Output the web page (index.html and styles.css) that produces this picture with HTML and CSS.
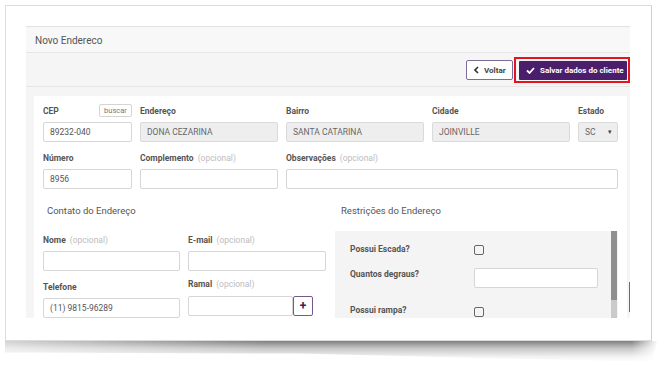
FILE: index.html
```html
<!DOCTYPE html>
<html lang="pt-BR">
<head>
  <meta charset="UTF-8">
  <title>Novo Endereco</title>
  <link rel="stylesheet" href="styles.css">
</head>
<body>
  <div class="sheet">
  <div class="frame">
    <div class="app">
      <div class="app-title">Novo Endereco</div>

      <!-- actions -->
      <div class="toolbar">
        <button class="btn-back">
          <svg width="5" height="8" viewBox="0 0 5 8"><path d="M4 1 L1 4 L4 7" stroke="#333" stroke-width="1.6" fill="none"/></svg>
          Voltar
        </button>
        <span class="highlight">
          <button class="btn-save">
            <svg width="9" height="7" viewBox="0 0 9 7"><path d="M1 3.5 L3.5 6 L8 1" stroke="#fff" stroke-width="1.8" fill="none"/></svg>
            Salvar dados do cliente
          </button>
        </span>
      </div>

      <div class="content">
        <div class="card">

          <!-- address -->
          <div class="grid-top">
            <div>
              <div class="field-label">CEP <span class="buscar">buscar</span></div>
              <input class="input" type="text" value="89232-040">
            </div>
            <div>
              <div class="field-label">Endereço</div>
              <input class="input locked" type="text" value="DONA CEZARINA" readonly>
            </div>
            <div>
              <div class="field-label">Bairro</div>
              <input class="input locked" type="text" value="SANTA CATARINA" readonly>
            </div>
            <div>
              <div class="field-label">Cidade</div>
              <input class="input locked" type="text" value="JOINVILLE" readonly>
            </div>
            <div>
              <div class="field-label">Estado</div>
              <div class="input locked select">SC <span class="caret">▾</span></div>
            </div>
          </div>

          <div class="grid-second">
            <div>
              <div class="field-label">Número</div>
              <input class="input" type="text" value="8956">
            </div>
            <div>
              <div class="field-label">Complemento <span class="opt">(opcional)</span></div>
              <input class="input" type="text">
            </div>
            <div>
              <div class="field-label">Observações <span class="opt">(opcional)</span></div>
              <input class="input" type="text">
            </div>
          </div>

          <div class="sections">
            <!-- contact -->
            <div>
              <h3 class="contact-title">Contato do Endereço</h3>
              <div class="contact-grid">
                <div>
                  <div class="field-label">Nome <span class="opt">(opcional)</span></div>
                  <input class="input" type="text">
                </div>
                <div>
                  <div class="field-label">E-mail <span class="opt">(opcional)</span></div>
                  <input class="input" type="email">
                </div>
                <div>
                  <div class="field-label">Telefone</div>
                  <input class="input" type="text" value="(11) 9815-96289">
                </div>
                <div>
                  <div class="field-label ramal">Ramal <span class="opt">(opcional)</span></div>
                  <div class="ramal-row">
                    <input class="input" type="text">
                    <button class="btn-plus">+</button>
                  </div>
                </div>
              </div>
            </div>

            <!-- restrictions -->
            <div>
              <h3 class="restrict-title">Restrições do Endereço</h3>
              <div class="panel">
                <div class="panel-body">
                  <div class="prow first">
                    <span>Possui Escada?</span>
                    <span class="check"></span>
                  </div>
                  <div class="prow">
                    <span>Quantos degraus?</span>
                    <input class="input" type="text">
                  </div>
                  <div class="prow last">
                    <span>Possui rampa?</span>
                    <span class="check"></span>
                  </div>
                </div>
                <div class="scroll"><div class="thumb"></div></div>
              </div>
            </div>
          </div>

        </div>
      </div>
      <div class="edge-mark"></div>
    </div>
  </div>
  <div class="curl"></div>
  </div>
</body>
</html>
```

FILE: styles.css
```css
body {
  margin: 0;
  background: #fff;
  font-family: Roboto, "Liberation Sans", sans-serif;
}
.sheet {
  margin: 5px 0 0 5px;
  width: 647px;
}
.frame {
  height: 336px;
  box-sizing: border-box;
  border: 1px solid #dcdcdc;
  border-right-color: #cfcfcf;
  background: #fff;
  padding: 20px 21px 0 20px;
}
/* curled shadow under the frame */
.curl {
  height: 21px;
  margin: 0 -6px 0 0;
  background: linear-gradient(to bottom, rgba(0,0,0,.5), rgba(0,0,0,.22) 35%, rgba(0,0,0,.05) 75%, rgba(0,0,0,0));
  clip-path: polygon(0 0, 100% 0, 99% 100%, 45% 60%, 0 55%);
  -webkit-mask-image: linear-gradient(to right, rgba(0,0,0,.35), #000 40%, #000 96%, transparent);
  mask-image: linear-gradient(to right, rgba(0,0,0,.35), #000 40%, #000 96%, transparent);
}
.app {
  position: relative;
  width: 604px;
  height: 292px;
  overflow: hidden;
  background: #f4f5f4;
}
.app-title {
  height: 25px;
  line-height: 28px;
  border-top: 1px solid #e2e2e2;
  border-bottom: 1px solid #e6e6e6;
  background: #f7f8f7;
  padding-left: 9px;
  font-size: 10px;
  color: #555;
}
.toolbar {
  height: 33px;
  border-bottom: 1px solid #e6e6e6;
  display: flex;
  justify-content: flex-end;
  align-items: center;
  gap: 1px;
}
.btn-back {
  width: 47px;
  height: 20px;
  display: flex;
  align-items: center;
  gap: 5px;
  padding: 0 0 0 7px;
  border: 1px solid #7d6b98;
  border-radius: 2px;
  background: #fff;
  font-family: inherit;
  font-size: 8px;
  font-weight: bold;
  color: #444;
  margin-top: 1px;
}
.highlight {
  display: flex;
  width: 116px;
  height: 26px;
  box-sizing: border-box;
  border: 2px solid #e2141e;
  padding: 2px 1px 1px 3px;
}
.btn-save {
  flex: 1;
  display: flex;
  align-items: center;
  gap: 5px;
  padding: 0 0 0 7px;
  border: none;
  border-radius: 1px;
  background: #4b1e6c;
  color: #fff;
  font-family: inherit;
  font-size: 8px;
  font-weight: bold;
  white-space: nowrap;
}
.content {
  padding: 9px 3px 0 8px;
}
.card {
  background: #fff;
  padding: 8px 9px 0 9px;
  height: 240px;
}
.grid-top {
  display: grid;
  grid-template-columns: 89px 138px 138px 138px 40px;
  column-gap: 8px;
}
.grid-second {
  display: grid;
  grid-template-columns: 89px 138px 1fr;
  column-gap: 8px;
  margin-top: 9px;
}
.field-label {
  display: flex;
  align-items: center;
  height: 13px;
  margin-bottom: 5px;
  font-size: 8.5px;
  font-weight: bold;
  color: #555;
  white-space: nowrap;
}
.field-label.ramal {
  margin-top: -3px;
  margin-bottom: 7px;
}
.opt {
  font-weight: normal;
  color: #bdbdbd;
  margin-left: 4px;
}
.buscar {
  margin-left: auto;
  width: 33px;
  height: 13px;
  box-sizing: border-box;
  border: 1px solid #d4d4d4;
  border-radius: 2px;
  font-size: 7.5px;
  font-weight: normal;
  color: #777;
  text-align: center;
  line-height: 11px;
}
.input {
  display: flex;
  align-items: center;
  width: 100%;
  height: 20px;
  box-sizing: border-box;
  border: 1px solid #d6d6d6;
  border-radius: 2px;
  background: #fff;
  padding: 0 6px;
  font-family: inherit;
  font-size: 8.5px;
  color: #555;
  margin: 0;
}
.input.locked {
  background: #eee;
  border-color: #dadada;
  color: #666;
}
.select {
  justify-content: space-between;
  padding: 0 5px 0 6px;
  color: #777;
}
.caret {
  font-size: 7px;
  color: #444;
}
.sections {
  display: grid;
  grid-template-columns: 283px 283px;
  column-gap: 9px;
  margin-top: 15px;
}
h3 {
  margin: 0;
  font-size: 9.5px;
  font-weight: normal;
  color: #555;
  line-height: 14px;
}
.contact-title {
  padding-left: 4px;
  margin-bottom: 15px;
}
.restrict-title {
  padding-left: 6px;
  margin-bottom: 13px;
}
.contact-grid {
  display: grid;
  grid-template-columns: 137px 138px;
  column-gap: 8px;
  row-gap: 9px;
}
.ramal-row {
  display: flex;
  margin-top: -1px;
}
.ramal-row .input {
  width: 105px;
}
.btn-plus {
  width: 20px;
  height: 20px;
  padding: 0;
  border: 1px solid #6f5b8d;
  border-radius: 2px;
  background: #fff;
  color: #3b2354;
  font-family: inherit;
  font-size: 12px;
  font-weight: bold;
  line-height: 16px;
}
.panel {
  display: flex;
  height: 100px;
  background: #f3f4f3;
}
.panel-body {
  flex: 1;
  padding: 11px 0 0 15px;
}
.prow {
  display: grid;
  grid-template-columns: 124px 124px;
  align-items: start;
  font-size: 8.5px;
  font-weight: bold;
  color: #555;
  line-height: 12px;
  margin-bottom: 16px;
}
.prow.first {
  line-height: 14px;
  margin-bottom: 12px;
}
.check {
  width: 10px;
  height: 10px;
  box-sizing: border-box;
  border: 1.5px solid #666;
  border-radius: 2px;
  margin-top: 3px;
}
.scroll {
  width: 6px;
  margin-right: 1px;
  background: #cacaca;
}
.thumb {
  height: 69px;
  background: #8f8f8f;
}
.edge-mark {
  position: absolute;
  right: 0;
  top: 256px;
  width: 1px;
  height: 30px;
  background: #7b5c9b;
}
```
